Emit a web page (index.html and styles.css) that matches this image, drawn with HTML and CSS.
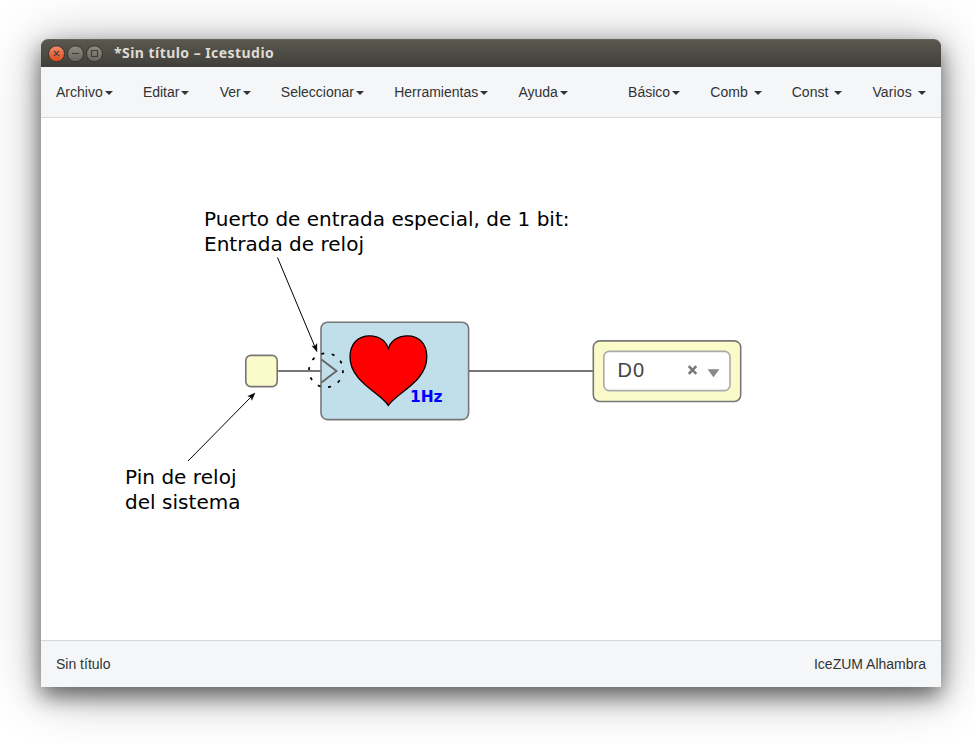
FILE: index.html
```
<!DOCTYPE html>
<html lang="es">
<head>
<meta charset="utf-8">
<title>Icestudio</title>
<link rel="stylesheet" href="styles.css">
</head>
<body>
<main class="window">
  <header class="titlebar">
    <svg class="controls" width="56" height="20" viewBox="0 0 56 20">
      <defs>
        <linearGradient id="close" x1="0" y1="0" x2="0" y2="1"><stop offset="0" stop-color="#f68c6b"/><stop offset="1" stop-color="#dc4a1c"/></linearGradient>
        <linearGradient id="grey" x1="0" y1="0" x2="0" y2="1"><stop offset="0" stop-color="#8f8d83"/><stop offset="1" stop-color="#65635b"/></linearGradient>
      </defs>
      <g stroke="#35342f" stroke-width="1">
        <circle cx="8.5" cy="9.8" r="8" fill="url(#close)"/>
        <circle cx="27.5" cy="9.8" r="8" fill="url(#grey)"/>
        <circle cx="46.5" cy="9.8" r="8" fill="url(#grey)"/>
      </g>
      <path d="M5.8 6.8l5.4 5.4M11.2 6.8l-5.4 5.4M24 9.5h7M43.5 6.5h6v6h-6z" fill="none" stroke="#403e38" stroke-width="1.2"/>
    </svg>
    <span class="title">*Sin título – Icestudio</span>
  </header>
  <nav class="menubar">
    <div class="menu">
      <span class="item">Archivo<i class="caret"></i></span>
      <span class="item">Editar<i class="caret"></i></span>
      <span class="item">Ver<i class="caret"></i></span>
      <span class="item">Seleccionar<i class="caret"></i></span>
      <span class="item">Herramientas<i class="caret"></i></span>
      <span class="item">Ayuda<i class="caret"></i></span>
    </div>
    <div class="menu tools">
      <span class="item">Básico<i class="caret"></i></span>
      <span class="item">Comb <i class="caret"></i></span>
      <span class="item">Const <i class="caret"></i></span>
      <span class="item">Varios <i class="caret"></i></span>
    </div>
  </nav>
  <svg class="canvas" width="900" height="522" viewBox="41 118 900 522">
    <g class="wire"><path d="M277 371H321M469 371H593"/></g>
    <g class="block">
      <rect x="245.8" y="355.4" width="31.4" height="31.2" rx="5" fill="#fbfac9"/>
      <rect x="321" y="322.2" width="147.6" height="97.4" rx="6.5" fill="#c1dfea"/>
      <rect x="593.3" y="340.9" width="147.4" height="60.6" rx="6.5" fill="#fbfac9"/>
      <path class="clock" d="M321.5 359.5L336.5 371L321.5 382.5"/>
    </g>
    <rect class="select" x="603.8" y="351.4" width="126.2" height="39.2" rx="5.5"/>
    <text class="value" x="617.5" y="377" textLength="26.5">D0</text>
    <path class="clear" d="M688.7 366.2L696.3 373.8M696.3 366.2L688.7 373.8"/>
    <path d="M707.6 369.3H719.4L713.5 377.2Z" fill="#888"/>
    <path class="heart" d="M388.3 405.5C381 393 350 382 350 357C350 344 358 335.8 369.5 335.8C380 335.8 387 342 388.3 349.5C389.6 342 397 335.8 407.5 335.8C419 335.8 426.8 344 426.8 357C426.8 382 396 393 388.3 405.5Z"/>
    <text class="freq" x="410" y="402" textLength="32.5">1Hz</text>
    <circle class="dots" cx="326" cy="370.3" r="17"/>
    <g class="arrow">
      <path d="M277.5 257.5L315 347M188 461L251 397"/>
      <path class="head" d="M317 351.8L311.9 345.8L314.7 346.6L316.9 343.6ZM255 393L251.8 400.3L251.2 397L247.8 396.2Z"/>
    </g>
    <g class="note">
      <text x="204" y="226" textLength="365.5">Puerto de entrada especial, de 1 bit:</text>
      <text x="204" y="251" textLength="160">Entrada de reloj</text>
      <text x="125" y="484" textLength="111.5">Pin de reloj</text>
      <text x="125" y="509" textLength="115.5">del sistema</text>
    </g>
  </svg>
  <footer class="status"><span>Sin título</span><span>IceZUM Alhambra</span></footer>
</main>
</body>
</html>
```
FILE: styles.css
```
* { box-sizing: border-box; }
body {
  margin: 0;
  height: 745px;
  padding: 39px 0 0 41px;
  overflow: hidden;
  background: #fff;
  font: 14px/20px "Liberation Sans", Arial, sans-serif;
  color: #333;
}
.window {
  display: flex;
  flex-direction: column;
  width: 900px;
  height: 648px;
  border-radius: 7px 7px 0 0;
  background: #fff;
  box-shadow: 0 9px 22px rgba(0, 0, 0, .55), 0 5px 55px rgba(0, 0, 0, .3);
}
.titlebar {
  display: flex;
  align-items: center;
  height: 28px;
  padding-left: 7px;
  gap: 10px;
  border-radius: 7px 7px 0 0;
  border-top: 1px solid #66655a;
  background: linear-gradient(#5a5950, #3f3e39);
}
.title {
  padding-bottom: 2px;
  font: bold 14px/20px "Noto Sans", "Open Sans", sans-serif;
  letter-spacing: .45px;
  color: #dfdbd2;
  white-space: nowrap;
}
.menubar {
  display: flex;
  justify-content: space-between;
  height: 51px;
  padding: 15px 15px 0;
  background: #f4f6f8;
  border-bottom: 1px solid #d5d7d9;
}
.menu { display: flex; gap: 30.2px; }
.tools .item:last-child { letter-spacing: .15px; }
.item { white-space: pre; }
.caret {
  display: inline-block;
  margin-left: 2px;
  vertical-align: middle;
  border: 4px solid transparent;
  border-top-color: #333;
  border-bottom: 0;
}
.canvas { display: block; flex: none; }
.status {
  display: flex;
  justify-content: space-between;
  height: 47px;
  padding: 13px 15px 0;
  background: #f4f6f8;
  border-top: 1px solid #d5d7d9;
}
.wire { stroke: #777; stroke-width: 2; }
.block { stroke: #777; stroke-width: 1.6; }
.block .clock { fill: none; stroke: #666; stroke-width: 1.9; }
.select { fill: #fff; stroke: #aaa; stroke-width: 1.6; }
.value { font: 20px "Liberation Sans", Arial, sans-serif; fill: #444; }
.clear { stroke: #777; stroke-width: 2.6; }
.heart { fill: #f00; stroke: #000; stroke-width: 1.3; }
.freq { font: bold 15.5px "DejaVu Sans", sans-serif; fill: #00f; }
.dots { fill: none; stroke: #000; stroke-width: 1.7; stroke-dasharray: 3 7.68; }
.arrow { stroke: #000; stroke-width: 1; fill: none; }
.arrow .head { fill: #000; stroke-width: .4; }
.note { font: 20px "DejaVu Sans", sans-serif; fill: #000; }
```
